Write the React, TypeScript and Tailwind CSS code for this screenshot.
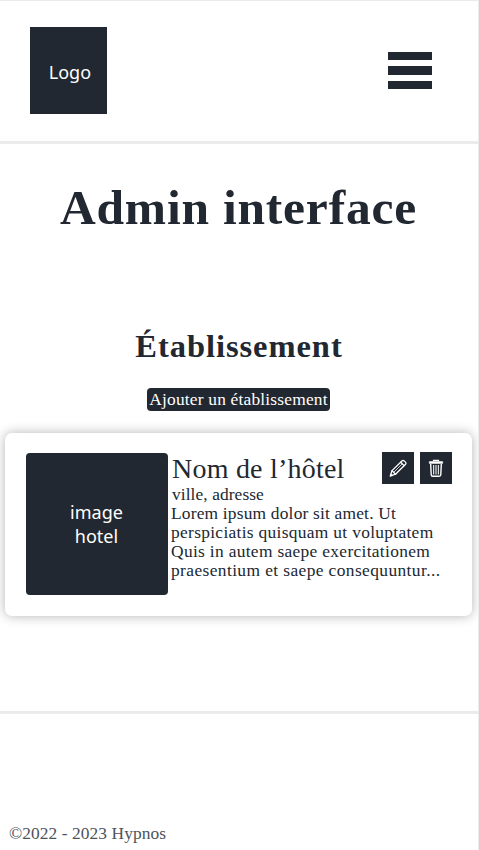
const lines = [
  { text: "Lorem ipsum dolor sit amet. Ut", tracking: "tracking-[0.19px]" },
  { text: "perspiciatis quisquam ut voluptatem", tracking: "tracking-[0.31px]" },
  { text: "Quis in autem saepe exercitationem", tracking: "tracking-[0.32px]" },
  { text: "praesentium et saepe consequuntur...", tracking: "tracking-[0.4px]" },
];

function PencilIcon() {
  return (
    <svg width="20" height="20" viewBox="0 0 20 20" fill="none" stroke="currentColor" strokeWidth="1.3" strokeLinejoin="round" strokeLinecap="round">
      <path d="M2.3 18 L4 12.6 L14.2 2.7 Q15.2 2 16.2 2.9 L17.7 4.4 Q18.4 5.3 17.6 6.2 L7.5 16.2 Z" />
      <path d="M4 12.6 L7.5 16.2 M12.7 4.2 L16.1 7.6" />
      <path d="M6 14 L14.2 5.9" strokeWidth="0.8" />
      <path d="M2.3 18 L3.1 15.7 L4.6 17.2 Z" fill="currentColor" strokeWidth="0.6" />
    </svg>
  );
}

function TrashIcon() {
  return (
    <svg width="16" height="19" viewBox="0 0 16 19" fill="none" stroke="currentColor">
      <path d="M5.5 2.2 V1.4 H10.5 V2.2" strokeWidth="1.2" />
      <rect x="1.2" y="2.5" width="13.6" height="2" rx="0.5" fill="currentColor" strokeWidth="0.5" />
      <path d="M2.7 5 L3.2 15.8 Q3.3 17.3 4.8 17.3 H11.2 Q12.7 17.3 12.8 15.8 L13.3 5" strokeWidth="1.4" />
      <path d="M5.6 6 V15.4 M8 6 V15.4 M10.4 6 V15.4" strokeWidth="1.2" opacity="0.85" />
    </svg>
  );
}

export default function App() {
  return (
    <div className="flex h-[850px] w-[479px] flex-col overflow-hidden border-t border-r border-[#ebebeb] bg-white font-['Liberation_Serif',serif] text-[#222831]">
      <header className="flex h-[143px] shrink-0 items-center justify-between border-b-[3px] border-[#ebebeb] pr-[46px] pb-px pl-[30.4px]">
        <div className="flex h-[87px] w-[77px] items-center justify-center bg-[#222831] pt-[3px] pl-[2px] font-['Noto_Sans',sans-serif] text-[18px] text-white">
          Logo
        </div>
        <div className="flex w-[44px] flex-col gap-[6px]">
          <span className="h-[8.5px] bg-[#222831]" />
          <span className="h-[8.5px] bg-[#222831]" />
          <span className="h-[8.5px] bg-[#222831]" />
        </div>
      </header>
      <main className="flex h-[567px] shrink-0 flex-col items-center">
        <h1 className="mt-[34px] mr-px text-[49.5px] leading-[60px] font-bold tracking-[0.8px]">Admin interface</h1>
        <h2 className="mt-[88px] text-[32.5px] leading-[40px] font-bold tracking-[0.95px]">Établissement</h2>
        <button className="mt-[22px] mr-px h-[23px] w-[183px] rounded-[4px] bg-[#222831] text-[17.4px] leading-[21px] tracking-[0.19px] whitespace-nowrap text-white">
          Ajouter un établissement
        </button>
        <article className="mt-[22px] mr-[2px] flex h-[183px] w-[467px] rounded-[7px] bg-white pt-[20px] pl-[21px] shadow-[0_0_12px_rgba(0,0,0,0.3)]">
          <div className="flex size-[142px] items-center justify-center rounded-[4px] bg-[#222831] text-center font-['Noto_Sans',sans-serif] text-[18px] leading-[24px] text-white">
            image
            <br />
            hotel
          </div>
          <div className="-mt-px ml-[3.5px] flex-1 whitespace-nowrap">
            <div className="flex h-[32px]">
              <h3 className="pt-px pl-px text-[28px] leading-[32px] tracking-[0.22px]">Nom de l’hôtel</h3>
              <div className="ml-auto flex gap-[6.5px] pr-[19.5px] text-white">
                <span className="flex size-[32px] items-center justify-center bg-[#222831]">
                  <PencilIcon />
                </span>
                <span className="flex size-[32px] items-center justify-center bg-[#222831]">
                  <TrashIcon />
                </span>
              </div>
            </div>
            <div className="pt-[0.6px] text-[17.4px] leading-[19.2px]">
              <p className="pl-px tracking-[0.08px]">ville, adresse</p>
              {lines.map((line) => (
                <p key={line.text} className={line.tracking}>
                  {line.text}
                </p>
              ))}
            </div>
          </div>
        </article>
      </main>
      <footer className="flex flex-1 flex-col justify-end border-t-[3px] border-[#ebebeb] pb-[7px] pl-[9px] text-[17.4px] leading-[20px] tracking-[0.07px] text-[#4e535a]">
        <p>©2022 - 2023 Hypnos</p>
      </footer>
    </div>
  );
}
